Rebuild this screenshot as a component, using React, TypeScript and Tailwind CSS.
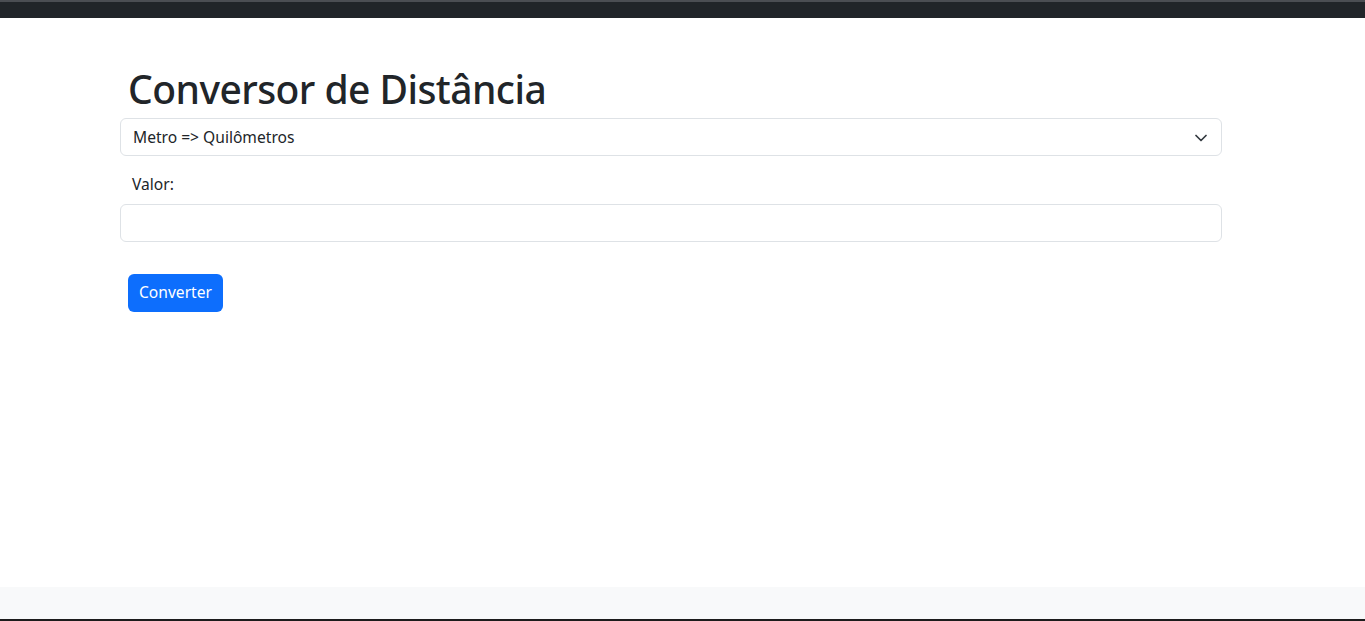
import React from 'react';

// Chevron of the select
const Chevron: React.FC = () => (
  <svg width="12" height="8" viewBox="0 0 12 8" fill="none" className="shrink-0">
    <path d="M1 1.5l5 5 5-5" stroke="#343a40" strokeWidth="1.7" strokeLinecap="round" strokeLinejoin="round" />
  </svg>
);

export default function App() {
  return (
    <div
      className="h-[621px] flex flex-col bg-white text-[#212529]"
      style={{ fontFamily: '"Noto Sans", "Open Sans", sans-serif' }}
    >
      {/* Top bar */}
      <div className="h-[18px] bg-[#212529] border-t-2 border-[#4b4e53] shrink-0" />

      <main className="flex-1">
        <div className="w-[1102px] ml-[120px] pt-[47px]">
          <h1 className="pl-2 text-[39px] leading-[48px] font-medium tracking-[-0.55px] mb-[5px]">
            Conversor de Distância
          </h1>

          <div className="h-[38px] border border-[#dee2e6] rounded-md flex items-center justify-between pl-3 pr-[14px] pt-px text-[15.6px]">
            <span>Metro =&gt; Quilômetros</span>
            <Chevron />
          </div>

          <label className="block pl-3 mt-[16px] mb-[8px] text-[15.6px] leading-6">Valor:</label>

          <input
            type="text"
            className="block w-full h-[38px] border border-[#dee2e6] rounded-md px-3 outline-none"
          />

          <button className="ml-2 mt-8 h-[38px] px-[11px] rounded-md bg-[#0d6efd] text-white text-[15.6px]">
            Converter
          </button>
        </div>
      </main>

      {/* Footer */}
      <footer className="h-[34px] bg-[#f8f9fa] border-b-2 border-[#1c1c1c] shrink-0" />
    </div>
  );
}
